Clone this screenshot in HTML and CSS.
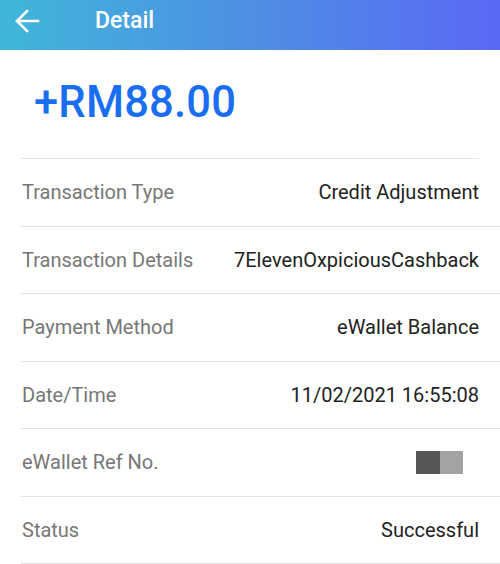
FILE: index.html
```html
<!DOCTYPE html>
<html>
<head>
<meta charset="utf-8">
<link rel="stylesheet" href="styles.css">
</head>
<body>
<header class="topbar">
  <svg class="back" width="26" height="26" viewBox="0 0 26 26" aria-hidden="true">
    <path d="M2 13 H23 M12 3 L2 13 L12 23" fill="none" stroke="#fff" stroke-width="2.6" stroke-linecap="square" stroke-linejoin="miter"/>
  </svg>
  <h1 class="title">Detail</h1>
</header>
<main class="content">
  <div class="amount">+RM88.00</div>
  <div class="row"><span class="label">Transaction Type</span><span class="value">Credit Adjustment</span></div>
  <div class="row"><span class="label">Transaction Details</span><span class="value">7ElevenOxpiciousCashback</span></div>
  <div class="row"><span class="label">Payment Method</span><span class="value">eWallet Balance</span></div>
  <div class="row"><span class="label">Date/Time</span><span class="value">11/02/2021 16:55:08</span></div>
  <div class="row"><span class="label">eWallet Ref No.</span><span class="value redacted"><span class="px dark"></span><span class="px light"></span></span></div>
  <div class="row"><span class="label">Status</span><span class="value">Successful</span></div>
</main>
</body>
</html>
```

FILE: styles.css
```css
* { box-sizing: border-box; }
html, body { margin: 0; padding: 0; background: #fff; }
body { font-family: Roboto, "Noto Sans", sans-serif; width: 500px; height: 564px; overflow: hidden; }

.topbar {
  height: 50px;
  display: flex;
  align-items: flex-start;
  padding: 8px 0 0 15px;
  background: linear-gradient(90deg, #3fb7d9 0%, #4e8fe4 50%, #5a68f5 100%);
}
.back { display: block; }
.title {
  margin: 1px 0 0 54px;
  font-size: 23px;
  font-weight: 500;
  color: #fff;
  line-height: 24px;
}

.content { padding-left: 21px; }

.amount {
  margin-right: 21px;
  padding: 28px 0 30px 13px;
  font-size: 43.5px;
  line-height: 50px;
  font-weight: 500;
  color: #1a6ef2;
  border-bottom: 1.5px solid #e2e2e2;
  letter-spacing: 0.2px;
}

.row {
  height: 67.5px;
  display: flex;
  align-items: center;
  justify-content: space-between;
  padding: 0 21px 0 1px;
  border-bottom: 1.5px solid #e2e2e2;
  font-size: 20px;
}
.label { color: #777; }
.value { color: #222; }

.redacted { display: flex; margin-right: 16px; }
.px { display: block; width: 24px; height: 23px; }
.dark { background: #565656; }
.light { background: #a3a3a3; width: 23px; }
```
